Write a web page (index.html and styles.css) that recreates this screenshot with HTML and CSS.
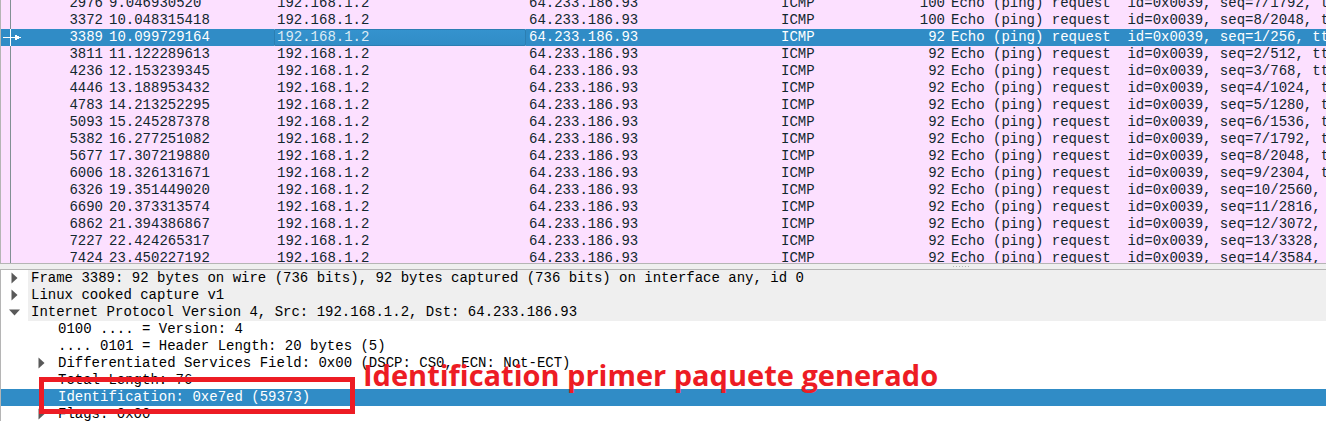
FILE: index.html
```html
<!DOCTYPE html>
<html lang="en">
<head>
<meta charset="utf-8">
<title>Packet capture</title>
<link rel="stylesheet" href="styles.css">
</head>
<body>
<main class="window">
  <section class="packets" aria-label="Packet list">
    <table class="packet-table">
      <colgroup><col class="c-mark"><col class="c-no"><col class="c-time"><col class="c-addr"><col class="c-addr"><col class="c-proto"><col class="c-len"><col></colgroup>
      <tbody>
        <tr><td class="mark"></td><td class="num">2976</td><td>9.046930520</td><td>192.168.1.2</td><td>64.233.186.93</td><td>ICMP</td><td class="num">100</td><td>Echo (ping) request  id=0x0039, seq=7/1792, ttl=64</td></tr>
        <tr><td class="mark"></td><td class="num">3372</td><td>10.048315418</td><td>192.168.1.2</td><td>64.233.186.93</td><td>ICMP</td><td class="num">100</td><td>Echo (ping) request  id=0x0039, seq=8/2048, ttl=64</td></tr>
        <tr class="selected"><td class="mark"><svg class="arrow" viewBox="0 0 20 17" aria-hidden="true"><path d="M2 8h13v1H2zM14 6h2v1h2v1h2v1h-2v1h-2v1h-2z"/></svg></td><td class="num">3389</td><td>10.099729164</td><td class="focus">192.168.1.2</td><td>64.233.186.93</td><td>ICMP</td><td class="num">92</td><td>Echo (ping) request  id=0x0039, seq=1/256, ttl=64</td></tr>
        <tr><td class="mark"></td><td class="num">3811</td><td>11.122289613</td><td>192.168.1.2</td><td>64.233.186.93</td><td>ICMP</td><td class="num">92</td><td>Echo (ping) request  id=0x0039, seq=2/512, ttl=64</td></tr>
        <tr><td class="mark"></td><td class="num">4236</td><td>12.153239345</td><td>192.168.1.2</td><td>64.233.186.93</td><td>ICMP</td><td class="num">92</td><td>Echo (ping) request  id=0x0039, seq=3/768, ttl=64</td></tr>
        <tr><td class="mark"></td><td class="num">4446</td><td>13.188953432</td><td>192.168.1.2</td><td>64.233.186.93</td><td>ICMP</td><td class="num">92</td><td>Echo (ping) request  id=0x0039, seq=4/1024, ttl=64</td></tr>
        <tr><td class="mark"></td><td class="num">4783</td><td>14.213252295</td><td>192.168.1.2</td><td>64.233.186.93</td><td>ICMP</td><td class="num">92</td><td>Echo (ping) request  id=0x0039, seq=5/1280, ttl=64</td></tr>
        <tr><td class="mark"></td><td class="num">5093</td><td>15.245287378</td><td>192.168.1.2</td><td>64.233.186.93</td><td>ICMP</td><td class="num">92</td><td>Echo (ping) request  id=0x0039, seq=6/1536, ttl=64</td></tr>
        <tr><td class="mark"></td><td class="num">5382</td><td>16.277251082</td><td>192.168.1.2</td><td>64.233.186.93</td><td>ICMP</td><td class="num">92</td><td>Echo (ping) request  id=0x0039, seq=7/1792, ttl=64</td></tr>
        <tr><td class="mark"></td><td class="num">5677</td><td>17.307219880</td><td>192.168.1.2</td><td>64.233.186.93</td><td>ICMP</td><td class="num">92</td><td>Echo (ping) request  id=0x0039, seq=8/2048, ttl=64</td></tr>
        <tr><td class="mark"></td><td class="num">6006</td><td>18.326131671</td><td>192.168.1.2</td><td>64.233.186.93</td><td>ICMP</td><td class="num">92</td><td>Echo (ping) request  id=0x0039, seq=9/2304, ttl=64</td></tr>
        <tr><td class="mark"></td><td class="num">6326</td><td>19.351449020</td><td>192.168.1.2</td><td>64.233.186.93</td><td>ICMP</td><td class="num">92</td><td>Echo (ping) request  id=0x0039, seq=10/2560, ttl=64</td></tr>
        <tr><td class="mark"></td><td class="num">6690</td><td>20.373313574</td><td>192.168.1.2</td><td>64.233.186.93</td><td>ICMP</td><td class="num">92</td><td>Echo (ping) request  id=0x0039, seq=11/2816, ttl=64</td></tr>
        <tr><td class="mark"></td><td class="num">6862</td><td>21.394386867</td><td>192.168.1.2</td><td>64.233.186.93</td><td>ICMP</td><td class="num">92</td><td>Echo (ping) request  id=0x0039, seq=12/3072, ttl=64</td></tr>
        <tr><td class="mark"></td><td class="num">7227</td><td>22.424265317</td><td>192.168.1.2</td><td>64.233.186.93</td><td>ICMP</td><td class="num">92</td><td>Echo (ping) request  id=0x0039, seq=13/3328, ttl=64</td></tr>
        <tr><td class="mark"></td><td class="num">7424</td><td>23.450227192</td><td>192.168.1.2</td><td>64.233.186.93</td><td>ICMP</td><td class="num">92</td><td>Echo (ping) request  id=0x0039, seq=14/3584, ttl=64</td></tr>
      </tbody>
    </table>
  </section>

  <div class="splitter" role="separator"><span class="grip"></span></div>

  <section class="details" aria-label="Packet details">
    <ul class="tree">
      <li class="row"><button class="toggle" aria-label="Expand frame" aria-expanded="false"><svg class="tri" viewBox="0 0 12 12" aria-hidden="true"><path d="M3.5 .5v11l6-5.500z"/></svg></button><span class="label top">Frame 3389: 92 bytes on wire (736 bits), 92 bytes captured (736 bits) on interface any, id 0</span></li>
      <li class="row"><button class="toggle" aria-label="Expand Linux cooked capture" aria-expanded="false"><svg class="tri" viewBox="0 0 12 12" aria-hidden="true"><path d="M3.5 .5v11l6-5.500z"/></svg></button><span class="label top">Linux cooked capture v1</span></li>
      <li class="row"><button class="toggle" aria-label="Collapse Internet Protocol" aria-expanded="true"><svg class="tri" viewBox="0 0 12 12" aria-hidden="true"><path d="M1 3.500h11l-5.500 6z"/></svg></button><span class="label top">Internet Protocol Version 4, Src: 192.168.1.2, Dst: 64.233.186.93</span></li>
      <li class="row child"><span class="toggle"></span><span class="label">0100 .... = Version: 4</span></li>
      <li class="row child"><span class="toggle"></span><span class="label">.... 0101 = Header Length: 20 bytes (5)</span></li>
      <li class="row child"><button class="toggle" aria-label="Expand Differentiated Services" aria-expanded="false"><svg class="tri" viewBox="0 0 12 12" aria-hidden="true"><path d="M3.5 .5v11l6-5.500z"/></svg></button><span class="label">Differentiated Services Field: 0x00 (DSCP: CS0, ECN: Not-ECT)</span></li>
      <li class="row child"><span class="toggle"></span><span class="label">Total Length: 76</span></li>
      <li class="row child selected"><span class="toggle"></span><span class="label">Identification: 0xe7ed (59373)</span></li>
      <li class="row child"><button class="toggle" aria-label="Expand flags" aria-expanded="false"><svg class="tri" viewBox="0 0 12 12" aria-hidden="true"><path d="M3.5 .5v11l6-5.500z"/></svg></button><span class="label">Flags: 0x00</span></li>
    </ul>
    <div class="callout-box"></div>
    <p class="callout-text">Identification primer paquete generado</p>
  </section>
</main>
</body>
</html>
```
FILE: styles.css
```css
* { box-sizing: border-box; }

body {
  margin: 0;
  background: #efefef;
  font: 14px/17px "Liberation Mono", monospace;
}

.window {
  display: flex;
  flex-direction: column;
  height: 100vh;
  overflow: hidden;
}

.packets {
  flex: 264 0 0;
  min-height: 0;
  overflow: hidden;
  border-left: 1px solid #b5b5b5;
  border-bottom: 1px solid #b5b5b5;
  background: #fce0ff;
  color: #12272e;
}

/* The list is scrolled part of the way through its first row. */
.packet-table {
  width: 100%;
  margin-top: -5px;
  table-layout: fixed;
  border-collapse: collapse;
}

.c-mark { width: 20px; }
.c-no { width: 85px; }
.c-time { width: 168px; }
.c-addr { width: 252px; }
.c-proto { width: 90px; }
.c-len { width: 80px; }

.packet-table td {
  height: 17px;
  padding: 0 3px;
  overflow: hidden;
  white-space: pre;
}

.packet-table .num { text-align: right; }

.packet-table .mark {
  padding: 0;
  background: linear-gradient(#819094, #819094) 9px 0 / 1px 100% no-repeat;
}

.selected {
  background: #308cc6;
  color: #fff;
}

.packet-table .selected .mark {
  background-image: linear-gradient(#fff, #fff);
}

.packet-table .focus {
  border-radius: 2px;
  background: linear-gradient(#3593ce, #308cc6);
  box-shadow: inset 0 0 0 1px #2b7eb2;
  color: #dcebf5;
}

.arrow {
  display: block;
  width: 20px;
  height: 17px;
  fill: #fff;
}

.splitter {
  display: flex;
  flex: none;
  align-items: center;
  height: 5px;
  padding-left: 953px;
}

.grip {
  width: 17px;
  height: 1px;
  background: repeating-linear-gradient(90deg, #b5b5b5 0 1px, transparent 1px 3px);
}

.details {
  position: relative;
  flex: 152 0 0;
  min-height: 0;
  overflow: hidden;
  border-top: 1px solid #b5b5b5;
  border-left: 1px solid #b5b5b5;
  background: #fff;
  color: #000;
}

.tree {
  margin: 0;
  padding: 0;
  list-style: none;
}

.row {
  display: flex;
  height: 17px;
  white-space: pre;
}

.row.selected {
  background: #308cc6;
  color: #fff;
}

.child { padding-left: 27px; }

.toggle {
  display: flex;
  flex: none;
  align-items: center;
  width: 27px;
  padding: 0 0 0 7px;
  border: 0;
  background: none;
}

.tri {
  width: 12px;
  height: 12px;
  fill: #595959;
}

.label {
  flex: 1;
  padding-left: 3px;
}

.top { background: #efefef; }

.callout-box {
  position: absolute;
  top: 107px;
  left: 38px;
  width: 316px;
  height: 37px;
  border: 5px solid #ed1c24;
}

.callout-text {
  position: absolute;
  top: 85px;
  left: 362px;
  margin: 0;
  color: #ed1c24;
  font: bold 29px/40px "Open Sans", sans-serif;
  white-space: nowrap;
}
```
